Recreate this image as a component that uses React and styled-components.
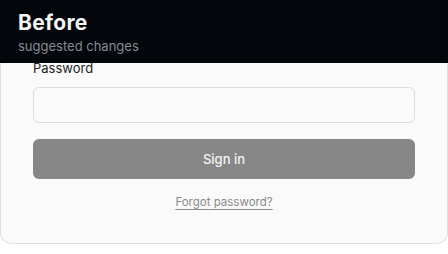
import React from 'react'
import styled, { createGlobalStyle } from 'styled-components'

const GlobalStyle = createGlobalStyle`
  html, body {
    margin: 0;
    padding: 0;
    background: #ffffff;
  }
  body {
    font-family: Inter, "Noto Sans", sans-serif;
  }
`

const Page = styled.div`
  position: relative;
  width: 448px;
  height: 254px;
  overflow: hidden;
`

const Header = styled.header`
  position: absolute;
  top: 0;
  left: 0;
  right: 0;
  height: 63px;
  background: #03060b;
  padding: 10px 18px 0;
  box-sizing: border-box;
  z-index: 2;
`

const Title = styled.h1`
  margin: 0;
  font-size: 21px;
  line-height: 26px;
  font-weight: 700;
  color: #f4f5f7;
  letter-spacing: 0.3px;
`

const Subtitle = styled.div`
  margin-top: 2px;
  font-size: 13px;
  line-height: 16px;
  color: #868a91;
`

const Card = styled.div`
  box-sizing: border-box;
  height: 244px;
  background: #fafafa;
  border: 1px solid #e0e0e0;
  border-top: none;
  border-radius: 0 0 12px 12px;
  padding: 59px 32px 0;
  display: flex;
  flex-direction: column;
`

const Label = styled.label`
  font-size: 13px;
  line-height: 18px;
  color: #222;
`

const Input = styled.input`
  box-sizing: border-box;
  margin-top: 10px;
  height: 36px;
  width: 100%;
  border: 1px solid #dcdcdc;
  border-radius: 6px;
  background: #fafafa;
  outline: none;
`

const Button = styled.button`
  margin-top: 16px;
  height: 40px;
  width: 100%;
  border: none;
  border-radius: 6px;
  background: #878787;
  color: #f4f4f4;
  font-family: Inter, "Noto Sans", sans-serif;
  font-size: 13px;
  font-weight: 500;
`

const Forgot = styled.a`
  align-self: center;
  margin-top: 16px;
  font-size: 11.5px;
  line-height: 14px;
  color: #8a8a8a;
  text-decoration: underline;
  text-underline-offset: 3px;
  text-decoration-color: #8a8a8a;
`

export default function App() {
  return (
    <Page>
      <GlobalStyle />
      <Header>
        <Title>Before</Title>
        <Subtitle>suggested changes</Subtitle>
      </Header>
      <Card>
        <Label>Password</Label>
        <Input type="password" />
        <Button>Sign in</Button>
        <Forgot>Forgot password?</Forgot>
      </Card>
    </Page>
  )
}
